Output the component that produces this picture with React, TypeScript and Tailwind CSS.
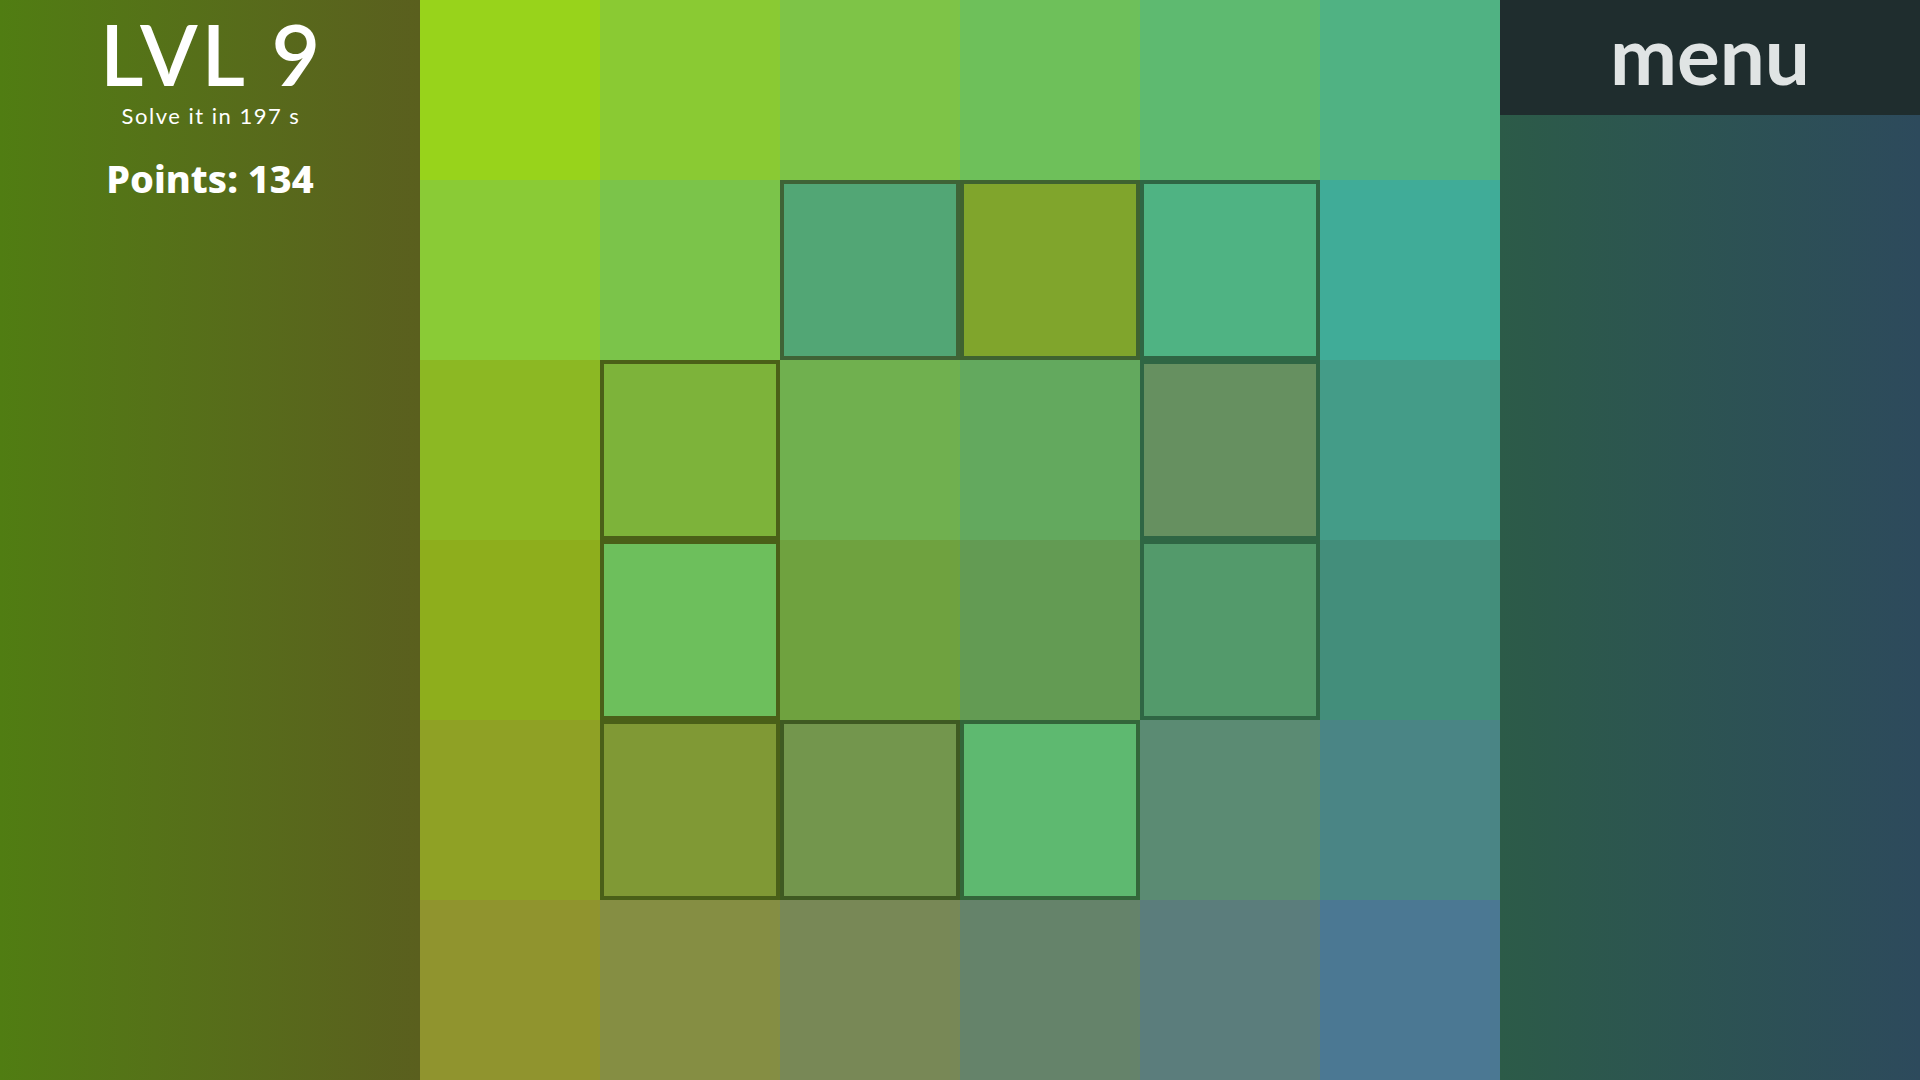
const CELLS: { c: string; sel?: boolean; b?: string }[][] = [
  [
    { c: '#98d31b' },
    { c: '#8aca33' },
    { c: '#7ec447' },
    { c: '#6ec05a' },
    { c: '#5eba70' },
    { c: '#50b283' },
  ],
  [
    { c: '#8acb36' },
    { c: '#7bc44a' },
    { c: '#52a675', sel: true, b: '#3f6336' },
    { c: '#80a52c', sel: true, b: '#3f6330' },
    { c: '#4fb383', sel: true, b: '#2f6644' },
    { c: '#40ac98' },
  ],
  [
    { c: '#8cb823' },
    { c: '#7db33a', sel: true, b: '#4a6018' },
    { c: '#70b04f' },
    { c: '#63a95e' },
    { c: '#669060', sel: true, b: '#2f6644' },
    { c: '#449c88' },
  ],
  [
    { c: '#8eae1c' },
    { c: '#6dbf5c', sel: true, b: '#4a6018' },
    { c: '#6fa23f' },
    { c: '#639b53' },
    { c: '#539a6b', sel: true, b: '#2f6644' },
    { c: '#438e7b' },
  ],
  [
    { c: '#8fa125' },
    { c: '#809935', sel: true, b: '#4a6018' },
    { c: '#73964d', sel: true, b: '#3f5a22' },
    { c: '#5eb970', sel: true, b: '#33663a' },
    { c: '#5b8b73' },
    { c: '#4a8585' },
  ],
  [
    { c: '#90942e' },
    { c: '#858e43' },
    { c: '#788856' },
    { c: '#65836a' },
    { c: '#5b7d7c' },
    { c: '#4b7893' },
  ],
]

const lato = { fontFamily: 'Lato, "Noto Sans", sans-serif' }
const noto = { fontFamily: '"Noto Sans", Lato, sans-serif' }

export default function App() {
  return (
    <div className="flex h-[1080px] w-[1920px] overflow-hidden">
      <aside className="flex w-[420px] flex-col items-center bg-gradient-to-r from-[#507d12] to-[#5a5f1e] text-white">
        <h1 className="mt-[12px] pl-[4px] text-[84px] font-semibold leading-none tracking-[4px]" style={lato}>
          LVL 9
        </h1>
        <p className="mt-[9px] pl-[2px] text-[22px] leading-none tracking-[1.5px]" style={lato}>
          Solve it in 197 s
        </p>
        <p className="mt-[32px] text-[38px] font-extrabold leading-none" style={noto}>
          Points: 134
        </p>
      </aside>

      <main className="grid h-[1080px] w-[1080px] grid-cols-6 grid-rows-6">
        {CELLS.flat().map((cell, i) => (
          <div
            key={i}
            className={cell.sel ? 'border-[4px]' : ''}
            style={{ backgroundColor: cell.c, borderColor: cell.b }}
          />
        ))}
      </main>

      <aside className="flex w-[420px] flex-col bg-gradient-to-r from-[#2c5b48] to-[#2d4a5c]">
        <div className="flex h-[115px] items-center justify-center bg-[#1f2d2e]">
          <span className="pb-[8px] text-[80px] font-bold leading-none text-[#e0e4e4]" style={lato}>
            menu
          </span>
        </div>
      </aside>
    </div>
  )
}
